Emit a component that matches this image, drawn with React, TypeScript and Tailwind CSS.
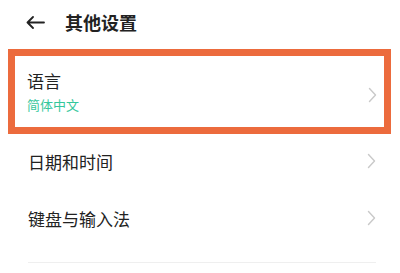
import React from 'react';

const font = { fontFamily: '"Noto Sans CJK SC", "Noto Sans", sans-serif' };

const Chevron = () => (
    <svg width="9" height="16" viewBox="0 0 9 16" fill="none" className="shrink-0">
        <path d="M1.5 1.5 L7.5 8 L1.5 14.5" stroke="#c9c9c9" strokeWidth="1.4" strokeLinecap="round" strokeLinejoin="round" />
    </svg>
);

export default function App() {
    return (
        <div className="w-[400px] h-[273px] bg-white overflow-hidden text-[#222222]" style={font}>
            {/* Header */}
            <div className="h-[44px] flex items-center pl-[26px]">
                <svg width="19" height="13" viewBox="0 0 19 13" fill="none">
                    <path d="M18 6.5 H1.5 M7 1 L1.5 6.5 L7 12" stroke="#222222" strokeWidth="1.8" strokeLinecap="round" strokeLinejoin="round" />
                </svg>
                <span className="ml-[20px] text-[18px] font-bold leading-none">其他设置</span>
            </div>

            {/* Highlighted language row */}
            <div className="mt-[5px] mx-[8px] mr-[9px] h-[85px] border-[7px] border-[#ec6b3d] flex items-center pl-[12px] pr-[7px]">
                <div className="flex-1 flex flex-col">
                    <span className="text-[17px] leading-[22px]">语言</span>
                    <span className="mt-[4px] text-[13px] leading-[18px] text-[#35c79c]">简体中文</span>
                </div>
                <div className="mt-[6px]">
                    <Chevron />
                </div>
            </div>

            {/* Other rows */}
            <div className="h-[54px] flex items-center pl-[28px] pr-[24px]">
                <span className="flex-1 text-[17px] leading-none">日期和时间</span>
                <Chevron />
            </div>
            <div className="h-[60px] flex items-center pl-[28px] pr-[24px]">
                <span className="flex-1 text-[17px] leading-none">键盘与输入法</span>
                <Chevron />
            </div>
            <div className="mt-[14px] ml-[28px] mr-[24px] h-px bg-[#efefef]" />
        </div>
    );
}
